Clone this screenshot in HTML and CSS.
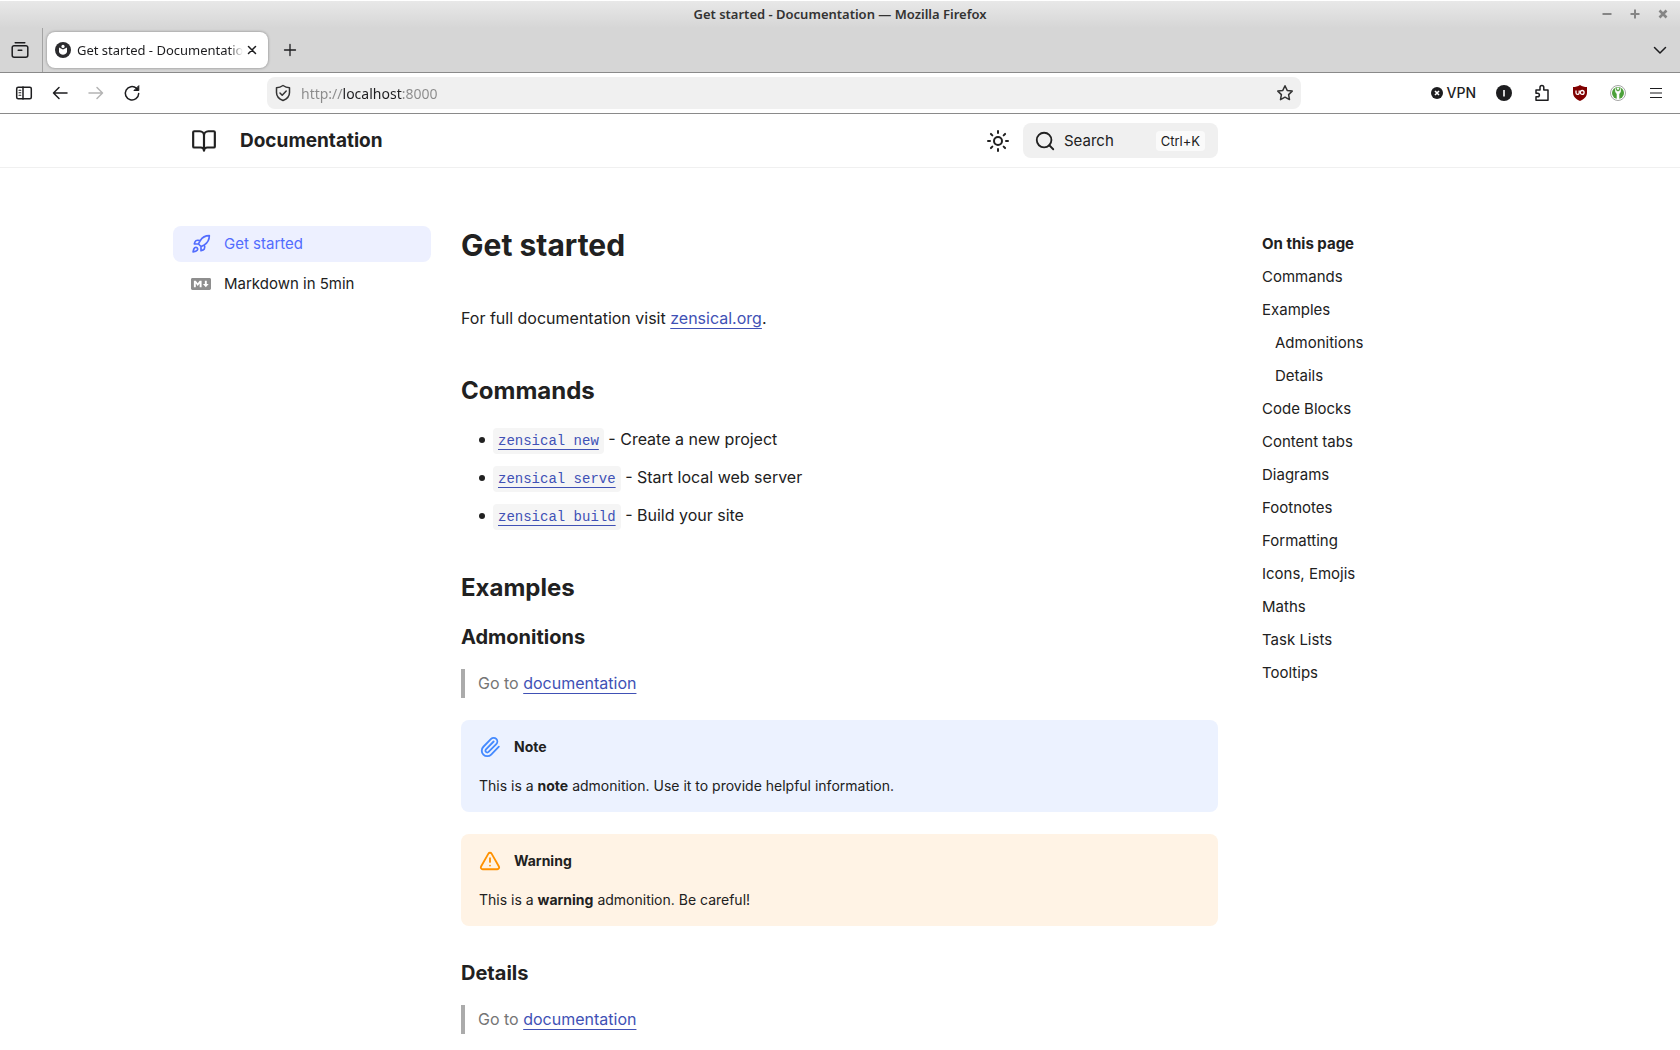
FILE: index.html
```html
<!DOCTYPE html>
<html lang="en">
<head>
<meta charset="utf-8">
<title>Get started - Documentation</title>
<link rel="stylesheet" href="styles.css">
</head>
<body>
<div class="window">
  <div class="titlebar">
    <span class="titlebar-text">Get started - Documentation — Mozilla Firefox</span>
    <div class="window-buttons">
      <button type="button" aria-label="Minimize"><svg width="12" height="12" viewBox="0 0 12 12"><path d="M1.500 6h9"/></svg></button>
      <button type="button" aria-label="Maximize"><svg width="12" height="12" viewBox="0 0 12 12"><path d="M1.500 6h9M6 1.500v9"/></svg></button>
      <button type="button" aria-label="Close"><svg width="12" height="12" viewBox="0 0 12 12"><path d="M2.500 2.500l7 7M9.500 2.500l-7 7" stroke-width="2.600"/></svg></button>
    </div>
  </div>

  <div class="tabbar">
    <button type="button" class="tool recent" aria-label="Recent tabs">
      <svg width="18" height="18" viewBox="0 0 18 18" class="line"><path d="M4.200 1.800h9.600M3 4.700h12a1.800 1.800 0 0 1 1.800 1.800v7.700a2 2 0 0 1-2 2H3.200a2 2 0 0 1-2-2V6.500A1.800 1.800 0 0 1 3 4.700zM7.200 9.300h3.600"/></svg>
    </button>
    <div class="tab">
      <svg class="favicon" width="16" height="16" viewBox="0 0 16 16"><circle cx="8" cy="8" r="8" fill="#2b2b2e"/><path d="M4 5.400 8 7.400l4-2V10c-.8 1.800-2.200 2.700-4 2.700S4.800 11.800 4 10z" fill="#fff"/><circle cx="8" cy="4.400" r="1.600" fill="#fff"/></svg>
      <span class="tab-title">Get started - Documentation</span>
      <button type="button" class="tab-close" aria-label="Close tab"><svg width="10" height="10" viewBox="0 0 10 10" class="line"><path d="M1.500 1.500l7 7M8.500 1.500l-7 7"/></svg></button>
    </div>
    <button type="button" class="tool new-tab" aria-label="New tab"><svg width="14" height="14" viewBox="0 0 14 14" class="line"><path d="M7 1.500v11M1.500 7h11" stroke-width="1.300"/></svg></button>
    <button type="button" class="tool all-tabs" aria-label="List all tabs"><svg width="14" height="14" viewBox="0 0 14 14" class="line"><path d="M1.500 4.500 7 10l5.500-5.500"/></svg></button>
  </div>

  <div class="toolbar">
    <div class="nav-tools">
      <button type="button" class="tool" aria-label="Sidebars"><svg width="18" height="18" viewBox="0 0 18 18" class="line"><rect x="1.700" y="3.200" width="14.600" height="11.600" rx="1.500"/><path d="M8 3v12"/><path d="M4 6.300h1.800M4 8.800h1.800M4 11.300h1.800" stroke-width="1.100"/></svg></button>
      <button type="button" class="tool" aria-label="Back"><svg width="18" height="18" viewBox="0 0 18 18" class="line"><path d="M16 9H2.500M8 3.500 2.500 9 8 14.500"/></svg></button>
      <button type="button" class="tool" aria-label="Forward" disabled><svg width="18" height="18" viewBox="0 0 18 18" class="line"><path d="M2 9h13.500M10 3.500 15.500 9 10 14.500"/></svg></button>
      <button type="button" class="tool" aria-label="Reload"><svg width="18" height="18" viewBox="0 0 18 18" class="line"><path d="M15.700 9.500A6.700 6.700 0 1 1 13.500 4.300"/><path d="M15.800 2v4.500h-4.500z" fill="currentColor" stroke-width="1"/></svg></button>
    </div>
    <div class="urlbar">
      <svg width="18" height="18" viewBox="0 0 18 18" class="line"><path d="M9 1.500c2 1.400 4.200 2.100 6.500 2.200v4.800c0 3.800-2.500 6.500-6.500 8-4-1.500-6.500-4.200-6.500-8V3.700C4.800 3.600 7 2.900 9 1.500zM6 9l2.200 2.200L12.200 7"/></svg>
      <input type="text" class="url" value="http://localhost:8000" aria-label="Address">
      <button type="button" class="star" aria-label="Bookmark this page"><svg width="18" height="18" viewBox="0 0 18 18" class="line"><path d="m9 1.800 2.200 4.600 5 .7-3.600 3.500.9 5L9 13.200l-4.500 2.400.9-5L1.800 7.100l5-.7z"/></svg></button>
    </div>
    <div class="extensions">
      <button type="button" class="vpn"><svg width="12" height="12" viewBox="0 0 12 12"><circle cx="6" cy="6" r="6" fill="#1d1d1f"/><path d="M4 4l4 4M8 4 4 8" stroke="#fff" stroke-width="1.600"/></svg>VPN</button>
      <button type="button" class="tool" aria-label="Account"><svg width="16" height="16" viewBox="0 0 16 16"><circle cx="8" cy="8" r="8" fill="#1d1d1f"/><path d="M8 5v6.500" stroke="#fff" stroke-width="1.600"/></svg></button>
      <button type="button" class="tool" aria-label="Extensions"><svg width="18" height="18" viewBox="0 0 18 18" class="line"><path d="M3 6h4V3.500a1.900 1.900 0 0 1 3.800 0V6h4.200v10.200H3V12.800h1.600a1.700 1.700 0 0 0 0-3.600H3z"/></svg></button>
      <button type="button" class="tool" aria-label="uBlock Origin"><svg width="16" height="16" viewBox="0 0 16 16"><path d="M8 0c2.200 1.400 4.500 2 7 2v5.500c0 4-2.800 6.500-7 8.500-4.200-2-7-4.500-7-8.500V2c2.500 0 4.800-.6 7-2z" fill="#800000"/><path d="M4 5.400v2.400a1.500 1.500 0 0 0 3.200 0V5.400" fill="none" stroke="#fff" stroke-width="1.300"/><circle cx="10.200" cy="7.400" r="1.900" fill="none" stroke="#fff" stroke-width="1.300"/></svg></button>
      <button type="button" class="tool" aria-label="KeePassXC"><svg width="16" height="16" viewBox="0 0 16 16"><circle cx="8" cy="8" r="7.500" fill="#fff" stroke="#a5a5a5"/><circle cx="8" cy="8" r="6" fill="#4ca03a"/><path d="M5.500 3.500c0 2 1 3 2.500 3s2.500-1 2.500-3v3.300L9 9v5H7V9L5.500 6.800z" fill="#fff" stroke="#fff" stroke-width=".6"/><circle cx="8" cy="3.600" r="1.200" fill="#fff"/></svg></button>
      <button type="button" class="tool" aria-label="Menu"><svg width="12" height="12" viewBox="0 0 12 12" class="line"><path d="M0 1.500h12M0 6h12M0 10.500h12" stroke-width="1.200"/></svg></button>
    </div>
  </div>

  <header class="site-header">
    <div class="container header-inner">
      <svg class="stroke" width="26" height="26" viewBox="0 0 24 24"><path d="M12 7v14M3 18a1 1 0 0 1-1-1V4a1 1 0 0 1 1-1h5a4 4 0 0 1 4 4 4 4 0 0 1 4-4h5a1 1 0 0 1 1 1v13a1 1 0 0 1-1 1h-6a3 3 0 0 0-3 3 3 3 0 0 0-3-3z"/></svg>
      <span class="site-title">Documentation</span>
      <button type="button" class="tool theme" aria-label="Switch to dark mode"><svg class="stroke" width="24" height="24" viewBox="0 0 24 24"><circle cx="12" cy="12" r="4"/><path d="M12 2v2M12 20v2M4.930 4.930l1.410 1.410M17.660 17.660l1.410 1.410M2 12h2M20 12h2M6.340 17.660l-1.410 1.410M19.070 4.930l-1.410 1.410"/></svg></button>
      <button type="button" class="search"><svg class="stroke" width="22" height="22" viewBox="0 0 24 24"><circle cx="11" cy="11" r="8"/><path d="m21 21-4.340-4.340"/></svg><span>Search</span><kbd>Ctrl+K</kbd></button>
    </div>
  </header>

  <div class="container page">
    <nav class="sidebar" aria-label="Navigation">
      <a href="#get-started" class="active"><svg class="stroke" width="20" height="20" viewBox="0 0 24 24"><path d="M4.500 16.500c-1.500 1.260-2 5-2 5s3.740-.5 5-2c.71-.84.7-2.130-.09-2.910a2.180 2.180 0 0 0-2.910-.09zM12 15l-3-3a22 22 0 0 1 2-3.950A12.880 12.880 0 0 1 22 2c0 2.720-.78 7.500-6 11a22.350 22.350 0 0 1-4 2zM9 12H4s.55-3.030 2-4c1.620-1.080 5 0 5 0M12 15v5s3.030-.55 4-2c1.080-1.620 0-5 0-5"/></svg>Get started</a>
      <a href="#markdown"><svg width="24" height="24" viewBox="0 0 24 24" class="md"><path fill="#8e8e8e" d="M20.560 18H3.440C2.650 18 2 17.370 2 16.590V7.410C2 6.630 2.650 6 3.440 6h17.120c.79 0 1.440.63 1.440 1.410v9.180c0 .78-.65 1.410-1.440 1.410M6.810 15.190v-3.660l1.920 2.350 1.920-2.350v3.660h1.930V8.810h-1.930l-1.920 2.350-1.920-2.350H4.890v6.380h1.920M19.690 12h-1.920V8.810h-1.920V12h-1.930l2.890 3.280L19.690 12z"/></svg>Markdown in 5min</a>
    </nav>

    <main class="content">
      <h1 id="get-started">Get started</h1>
      <p>For full documentation visit <a href="#zensical">zensical.org</a>.</p>
      <h2 id="commands">Commands</h2>
      <ul>
        <li><a href="#new"><code>zensical new</code></a> - Create a new project</li>
        <li><a href="#serve"><code>zensical serve</code></a> - Start local web server</li>
        <li><a href="#build"><code>zensical build</code></a> - Build your site</li>
      </ul>
      <h2 id="examples">Examples</h2>
      <h3 id="admonitions">Admonitions</h3>
      <blockquote>Go to <a href="#admonition-docs">documentation</a></blockquote>
      <div class="admonition note">
        <p class="admonition-title"><svg class="stroke" width="22" height="22" viewBox="0 0 24 24"><path d="m16 6-8.414 8.586a2 2 0 0 0 2.829 2.829l8.414-8.586a4 4 0 1 0-5.657-5.657l-8.379 8.551a6 6 0 1 0 8.485 8.485l8.379-8.551"/></svg>Note</p>
        <p>This is a <strong>note</strong> admonition. Use it to provide helpful information.</p>
      </div>
      <div class="admonition warning">
        <p class="admonition-title"><svg class="stroke" width="22" height="22" viewBox="0 0 24 24"><path d="m21.730 18-8-14a2 2 0 0 0-3.480 0l-8 14A2 2 0 0 0 4 21h16a2 2 0 0 0 1.730-3M12 9v4M12 17h.01"/></svg>Warning</p>
        <p>This is a <strong>warning</strong> admonition. Be careful!</p>
      </div>
      <h3 id="details">Details</h3>
      <blockquote>Go to <a href="#details-docs">documentation</a></blockquote>
    </main>

    <nav class="toc" aria-label="On this page">
      <strong>On this page</strong>
      <a href="#commands">Commands</a>
      <a href="#examples">Examples</a>
      <a href="#admonitions" class="nested">Admonitions</a>
      <a href="#details" class="nested">Details</a>
      <a href="#code-blocks">Code Blocks</a>
      <a href="#content-tabs">Content tabs</a>
      <a href="#diagrams">Diagrams</a>
      <a href="#footnotes">Footnotes</a>
      <a href="#formatting">Formatting</a>
      <a href="#icons">Icons, Emojis</a>
      <a href="#maths">Maths</a>
      <a href="#task-lists">Task Lists</a>
      <a href="#tooltips">Tooltips</a>
    </nav>
  </div>
</div>
</body>
</html>
```
FILE: styles.css
```css
* { box-sizing: border-box; }

body {
  margin: 0;
  background: #fff;
  color: #212121;
  font: 16px/26px Inter, "Liberation Sans", sans-serif;
}

svg { display: block; flex: none; }

button {
  margin: 0;
  padding: 0;
  border: 0;
  background: none;
  color: inherit;
  font: inherit;
}

.line {
  fill: none;
  stroke: currentColor;
  stroke-width: 1.5;
  stroke-linejoin: round;
  stroke-linecap: round;
}

.stroke {
  fill: none;
  stroke: currentColor;
  stroke-width: 2;
  stroke-linejoin: round;
  stroke-linecap: round;
}

.tool {
  display: flex;
  align-items: center;
  justify-content: center;
  width: 36px;
  height: 36px;
}

/* Browser chrome */
.titlebar {
  position: relative;
  display: flex;
  align-items: center;
  justify-content: center;
  height: 28px;
  padding-bottom: 2px;
  border-top: 1px solid #fff;
  background: linear-gradient(#e8e8e8, #d6d6d6);
}

.titlebar-text {
  font: 600 13px/18px "Noto Sans", sans-serif;
  color: #333;
}

.window-buttons {
  position: absolute;
  top: 7px;
  right: 11px;
  display: flex;
  gap: 16px;
}

.window-buttons svg {
  stroke: #858585;
  stroke-width: 2;
}

.tabbar {
  display: flex;
  align-items: center;
  height: 45px;
  border-bottom: 1px solid #8a8a8a;
  background: #d6d6d6;
  color: #1d1d1f;
}

.recent {
  width: 43px;
  height: 44px;
  padding-right: 2px;
  border-right: 1px solid #a3a3a3;
}

.tab {
  display: flex;
  align-items: center;
  width: 221px;
  height: 36px;
  margin-left: 4px;
  padding: 0 8px;
  border-radius: 8px;
  background: #fff;
  box-shadow: 0 0 3px #0006;
}

.tab-title {
  flex: 1;
  margin: 0 1px 0 6px;
  overflow: hidden;
  white-space: nowrap;
  font: 13px/18px "Noto Sans", sans-serif;
  mask-image: linear-gradient(90deg, #000 calc(100% - 14px), transparent);
}

.tab-close { padding: 3px; }
.new-tab { margin-left: 4px; }
.all-tabs { margin: 0 2px 0 auto; }

.toolbar {
  display: flex;
  align-items: center;
  height: 41px;
  border-bottom: 1px solid #8a8a8a;
  background: #fff;
  color: #1d1d1f;
}

.nav-tools {
  display: flex;
  width: 267px;
  padding-left: 6px;
}

.tool:disabled { color: #b4b4b4; }

.urlbar {
  display: flex;
  flex: 1;
  align-items: center;
  height: 32px;
  padding: 0 7px;
  border-radius: 8px;
  background: #f0f0f0;
  color: #333;
}

.url {
  flex: 1;
  min-width: 0;
  margin-left: 9px;
  padding: 2px 0 0;
  border: 0;
  background: linear-gradient(90deg, #8a8a8a 41px, #1d1d1f 41px 101px, #8a8a8a 101px);
  background-clip: text;
  color: transparent;
  font: 14px/20px "Noto Sans", sans-serif;
}

.extensions {
  display: flex;
  align-items: center;
  justify-content: flex-end;
  gap: 2px;
  width: 379px;
  padding-right: 6px;
}

.vpn {
  display: flex;
  align-items: center;
  gap: 4px;
  margin-right: 8px;
  font: 500 14px/20px Inter, sans-serif;
}

/* Site header */
.container {
  max-width: 1334px;
  margin: 0 auto;
}

.site-header { border-bottom: 1px solid #f0f0f0; }

.header-inner {
  display: flex;
  align-items: center;
  height: 53px;
  padding: 0 289px 0 18px;
}

.site-title {
  margin: 0 auto 0 23px;
  font-size: 19px;
  font-weight: 700;
}

.search {
  display: flex;
  align-items: center;
  width: 195px;
  height: 35px;
  margin-left: 7px;
  padding: 0 13px 0 11px;
  border-radius: 8px;
  background: #f0f0f0;
  font-size: 15px;
}

.search span { margin: 0 auto 0 8px; }

kbd {
  padding: 0 5px;
  border-radius: 4px;
  background: #fafafa;
  font: 13px/20px Inter, sans-serif;
}

/* Page columns */
.page {
  display: grid;
  grid-template-columns: 258px minmax(0, 1fr) 245px;
  align-items: start;
  padding-top: 57px;
}

.sidebar,
.toc {
  display: flex;
  flex-direction: column;
  font-size: 15px;
}

.sidebar { gap: 4px; padding-top: 1px; }

.sidebar a {
  display: flex;
  align-items: center;
  gap: 13px;
  height: 36px;
  padding: 0 18px;
  border-radius: 8px;
  color: inherit;
  text-decoration: none;
}

.sidebar .active {
  background: #edf0ff;
  color: #526cfe;
}

.sidebar .md { margin: 0 -2px; }

.toc {
  gap: 13px;
  padding-top: 9px;
  line-height: 20px;
}

.toc a {
  color: inherit;
  text-decoration: none;
}

.toc .nested { padding-left: 13px; }

/* Article */
.content { padding: 0 44px 15px 30px; }

.content p { margin: 0; }

.content a {
  color: #4051b5;
  text-decoration: underline;
  text-underline-offset: 4px;
}

h1 {
  margin: 0 0 40px;
  font-size: 30px;
  line-height: 40px;
}

h2 {
  margin: 44px 0 19px;
  font-size: 24px;
  line-height: 32px;
}

h3 {
  margin: 20px 0 19px;
  font-size: 20px;
  line-height: 26px;
}

.content ul {
  display: flex;
  flex-direction: column;
  gap: 12px;
  margin: 0;
  padding-left: 18px;
  list-style: none;
}

.content li::before {
  content: "";
  display: inline-block;
  width: 6px;
  height: 6px;
  margin-right: 8px;
  border-radius: 50%;
  background: #212121;
  vertical-align: 2px;
}

code {
  padding: 5px;
  border-radius: 4px;
  background: #f5f5f5;
  font: 14px/20px "Liberation Mono", monospace;
}

blockquote {
  margin: 0 0 22px;
  padding: 1px 0 2px 13px;
  border-left: 4px solid #ababab;
  color: #757575;
}

.admonition {
  display: flex;
  flex-direction: column;
  gap: 13px;
  margin-bottom: 22px;
  padding: 14px 17px 13px 18px;
  border-radius: 8px;
  font-size: 14px;
}

.admonition-title {
  display: flex;
  align-items: center;
  gap: 13px;
  font-weight: 700;
}

.note { background: #ecf2ff; }
.note svg { color: #448aff; }
.warning { margin-bottom: 34px; background: #fff3e5; }
.warning svg { color: #ff9100; }
```
